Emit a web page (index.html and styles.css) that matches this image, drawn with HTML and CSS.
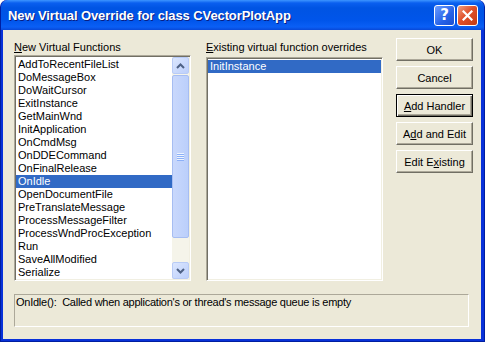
FILE: index.html
```html
<!DOCTYPE html>
<html lang="en">
<head>
  <meta charset="UTF-8">
  <title>New Virtual Override</title>
  <link rel="stylesheet" href="styles.css">
</head>
<body>
  <div class="window">
    <div class="titlebar">
      <span class="title">New Virtual Override for class CVectorPlotApp</span>
      <div class="caption-buttons">
        <span class="cbtn help">?</span>
        <span class="cbtn close">
          <svg width="11" height="11" viewBox="0 0 11 11"><path d="M1.5 1.5 L9.5 9.5 M9.5 1.5 L1.5 9.5" stroke="#fff" stroke-width="2.2" stroke-linecap="square"/></svg>
        </span>
      </div>
    </div>
    <div class="client">
      <div class="main">
        <div class="column">
          <div class="label"><u>N</u>ew Virtual Functions</div>
          <div class="listbox">
            <ul class="items">
              <li>AddToRecentFileList</li>
              <li>DoMessageBox</li>
              <li>DoWaitCursor</li>
              <li>ExitInstance</li>
              <li>GetMainWnd</li>
              <li>InitApplication</li>
              <li>OnCmdMsg</li>
              <li>OnDDECommand</li>
              <li>OnFinalRelease</li>
              <li class="selected">OnIdle</li>
              <li>OpenDocumentFile</li>
              <li>PreTranslateMessage</li>
              <li>ProcessMessageFilter</li>
              <li>ProcessWndProcException</li>
              <li>Run</li>
              <li>SaveAllModified</li>
              <li>Serialize</li>
            </ul>
            <div class="scrollbar">
              <div class="sb-btn">
                <svg width="9" height="6" viewBox="0 0 9 6"><path d="M1 5 L4.5 1.5 L8 5" fill="none" stroke="#4d6185" stroke-width="2"/></svg>
              </div>
              <div class="sb-thumb">
                <div class="grip"><i></i><i></i><i></i><i></i></div>
              </div>
              <div class="sb-track"></div>
              <div class="sb-btn">
                <svg width="9" height="6" viewBox="0 0 9 6"><path d="M1 1 L4.5 4.5 L8 1" fill="none" stroke="#4d6185" stroke-width="2"/></svg>
              </div>
            </div>
          </div>
        </div>
        <div class="column">
          <div class="label"><u>E</u>xisting virtual function overrides</div>
          <div class="listbox">
            <ul class="items">
              <li class="selected">InitInstance</li>
            </ul>
          </div>
        </div>
        <div class="buttons">
          <button class="btn">OK</button>
          <button class="btn">Cancel</button>
          <button class="btn default"><u>A</u>dd Handler</button>
          <button class="btn">A<u>d</u>d and Edit</button>
          <button class="btn">Edit E<u>x</u>isting</button>
        </div>
      </div>
      <div class="status">OnIdle():&nbsp; Called when application's or thread's message queue is empty</div>
    </div>
  </div>
</body>
</html>
```

FILE: styles.css
```css
* {
  box-sizing: border-box;
  margin: 0;
  padding: 0;
}

body {
  width: 485px;
  height: 342px;
  overflow: hidden;
  background: #fff;
  font-family: "Liberation Sans", Arial, sans-serif;
  font-size: 11px;
  color: #000;
}

.window {
  width: 485px;
  height: 342px;
  display: flex;
  flex-direction: column;
  background: #0831d9;
  border-radius: 7px 7px 0 0;
  border: 1px solid #001ea0;
  border-top: none;
  padding: 0 3px 2px 2px;
}

.titlebar {
  height: 30px;
  margin: 0 -3px 0 -2px;
  display: flex;
  align-items: center;
  justify-content: space-between;
  padding: 0 6px 0 7px;
  border-radius: 7px 7px 0 0;
  background: linear-gradient(to bottom, #3d95ff 0, #0a5fef 3px, #0054e3 8px, #0055ea 20px, #0a5ff5 27px, #0848d8 30px);
}

.title {
  font-family: "Liberation Sans", Arial, sans-serif;
  font-weight: bold;
  font-size: 13px;
  letter-spacing: -0.1px;
  color: #fff;
  text-shadow: 1px 1px 0 #0a1e80;
  margin-top: 1px;
}

.caption-buttons {
  display: flex;
  gap: 2px;
}

.cbtn {
  width: 21px;
  height: 21px;
  border: 1px solid #fff;
  border-radius: 3px;
  display: flex;
  align-items: center;
  justify-content: center;
  color: #fff;
}

.help {
  background: linear-gradient(135deg, #6c9dff, #2662e8 60%, #1a4fd0);
  font-family: "DejaVu Sans", sans-serif;
  font-weight: bold;
  font-size: 15px;
}

.close {
  background: linear-gradient(135deg, #f0a080, #e0502a 45%, #c43a14);
}

.client {
  flex: 1;
  background: #ece9d8;
  display: flex;
  flex-direction: column;
  padding: 11px 8px 12px 11px;
}

.main {
  display: flex;
  height: 240px;
}

.column {
  width: 177px;
  display: flex;
  flex-direction: column;
  margin-right: 15px;
}

.column + .column {
  margin-right: 13px;
}

.label {
  height: 16px;
  line-height: 13px;
}

.listbox {
  flex: 1;
  display: flex;
  background: #fff;
  border: 1px solid;
  border-color: #aca899 #fff #fff #aca899;
  box-shadow: inset 1px 1px 0 #716f64, inset -1px -1px 0 #f1efe2;
  padding: 1px;
}

.items {
  list-style: none;
  flex: 1;
  padding-top: 1px;
}

.items li {
  height: 13px;
  line-height: 13px;
  padding-left: 2px;
  white-space: nowrap;
}

.items li.selected {
  background: #316ac5;
  color: #fff;
}

.scrollbar {
  width: 17px;
  display: flex;
  flex-direction: column;
  background: #f5f4ea;
}

.sb-btn {
  height: 17px;
  display: flex;
  align-items: center;
  justify-content: center;
  border: 1px solid #b8cbf6;
  border-radius: 2px;
  background: linear-gradient(135deg, #dbe6fe, #bccffb);
}

.sb-thumb {
  height: 163px;
  margin-top: 1px;
  border: 1px solid #a6bdf2;
  border-radius: 2px;
  background: linear-gradient(to right, #c9d8fc, #bbcffb);
  display: flex;
  align-items: center;
  justify-content: center;
}

.grip {
  display: flex;
  flex-direction: column;
  gap: 1px;
}

.grip i {
  display: block;
  width: 7px;
  height: 1px;
  background: #eef4fe;
  box-shadow: 0 1px 0 #8cb0f8;
}

.sb-track {
  flex: 1;
}

.buttons {
  display: flex;
  flex-direction: column;
  gap: 5px;
  margin-top: -3px;
}

.btn {
  width: 77px;
  height: 23px;
  font-family: inherit;
  font-size: 11px;
  background: #ece9d8;
  color: #000;
  border: 1px solid;
  border-color: #fff #716f64 #716f64 #fff;
  box-shadow: inset -1px -1px 0 #aca899;
}

.btn.default {
  border: 1px solid #000;
  box-shadow: inset 1px 1px 0 #fff, inset -1px -1px 0 #716f64, inset -2px -2px 0 #aca899;
}

.status {
  margin-top: 13px;
  height: 33px;
  width: 455px;
  border: 1px solid;
  border-color: #aca899 #fff #fff #aca899;
  padding: 1px 0 0 1px;
  line-height: 13px;
  letter-spacing: -0.25px;
}
```
